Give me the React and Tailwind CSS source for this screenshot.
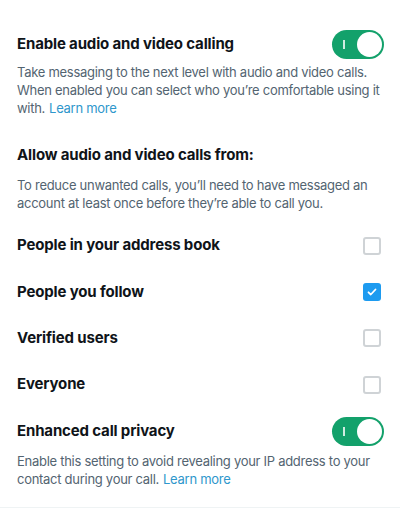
import React from "react";

const Toggle = () => (
  <div className="relative w-[52px] h-[29px] rounded-full bg-[#13a16b] shrink-0">
    <span className="absolute left-[11px] top-[10px] w-[1.5px] h-[9px] bg-white/80" />
    <span className="absolute right-[2px] top-[2px] w-[25px] h-[25px] rounded-full bg-white" />
  </div>
);

const Checkbox = ({ checked }) =>
  checked ? (
    <div className="w-[18px] h-[18px] rounded-[3px] bg-[#1d9bf0] flex items-center justify-center">
      <svg width="12" height="12" viewBox="0 0 12 12" fill="none">
        <path d="M2.5 6.3l2.3 2.2 4.7-5" stroke="white" strokeWidth="1.8" strokeLinecap="round" strokeLinejoin="round" />
      </svg>
    </div>
  ) : (
    <div className="w-[18px] h-[18px] rounded-[3px] border-2 border-[#cfd3d6]" />
  );

const Option = ({ label, checked }) => (
  <div className="flex items-center justify-between h-[46.3px] pr-[19px]">
    <span className="text-[15px] font-bold tracking-[-0.15px] text-[#0f1419]">{label}</span>
    <Checkbox checked={checked} />
  </div>
);

const Desc = ({ children, className = "" }) => (
  <p className={`text-[13px] leading-[18px] tracking-[-0.28px] text-[#536471] pr-[10px] ${className}`}>{children}</p>
);

const LearnMore = () => <span className="inline-block ml-[4px] text-[#2f97cc]">Learn more</span>;

export default function App() {
  return (
    <div className="w-[400px] h-[508px] bg-white overflow-hidden font-['Inter',sans-serif] text-[#0f1419] pl-[17px] border-b border-[#eff3f4]">
      <div className="flex items-center justify-between pt-[30px] pr-[16px]">
        <h2 className="text-[15px] font-bold tracking-[-0.15px]">Enable audio and video calling</h2>
        <Toggle />
      </div>
      <Desc className="mt-[4px]">
        <span>Take messaging to the next level with audio and video calls. When enabled you can select who you’re comfortable using it </span>
        <span>with.</span>
        <LearnMore />
      </Desc>

      <h2 className="text-[15px] font-bold tracking-[-0.15px] mt-[27px]">Allow audio and video calls from:</h2>
      <Desc className="mt-[9px]">
        To reduce unwanted calls, you’ll need to have messaged an account at least once before they’re able to call you.
      </Desc>

      <div className="mt-[11px]">
        <Option label="People in your address book" />
        <Option label="People you follow" checked />
        <Option label="Verified users" />
        <Option label="Everyone" />
      </div>

      <div className="flex items-center justify-between pt-[9px] pr-[16px]">
        <h2 className="text-[15px] font-bold tracking-[-0.15px]">Enhanced call privacy</h2>
        <Toggle />
      </div>
      <Desc className="mt-[6px]">
        <span>Enable this setting to avoid revealing your IP address to your </span>
        <span>contact during your call.</span>
        <LearnMore />
      </Desc>
    </div>
  );
}
